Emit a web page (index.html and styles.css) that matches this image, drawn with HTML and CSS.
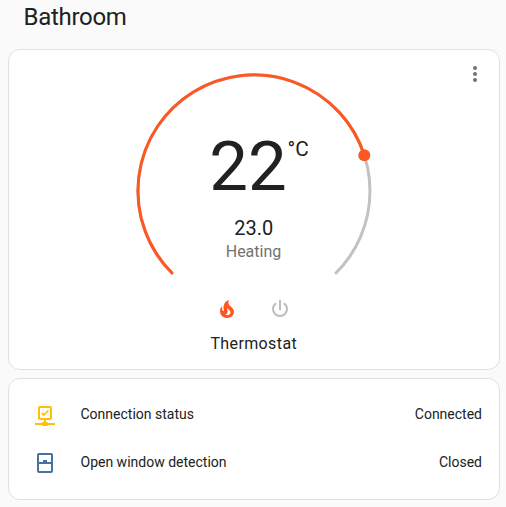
FILE: index.html
```html
<!DOCTYPE html>
<html lang="en">
<head>
<meta charset="utf-8">
<title>Bathroom</title>
<link rel="stylesheet" href="styles.css">
</head>
<body>
<h1 class="title">Bathroom</h1>
<main class="cards">
  <section class="card thermostat">
    <button class="more" aria-label="More">
      <svg class="icon" viewBox="0 0 24 24"><path d="M12,16A2,2 0 0,1 14,18A2,2 0 0,1 12,20A2,2 0 0,1 10,18A2,2 0 0,1 12,16M12,10A2,2 0 0,1 14,12A2,2 0 0,1 12,14A2,2 0 0,1 10,12A2,2 0 0,1 12,10M12,4A2,2 0 0,1 14,6A2,2 0 0,1 12,8A2,2 0 0,1 10,6A2,2 0 0,1 12,4Z"/></svg>
    </button>
    <svg class="dial" viewBox="0 0 248 220">
      <path class="track" d="M42 211A116 116 0 1 1 206 211"/>
      <path class="value" d="M42 211A116 116 0 1 1 234.3 93.2"/>
      <circle class="knob" cx="234.3" cy="93.2" r="6"/>
      <text class="current" x="79.2" y="128">22</text>
      <text class="unit" x="157.6" y="94">°C</text>
      <text class="target" x="123.7" y="173">23.0</text>
      <text class="action" x="123.5" y="195">Heating</text>
    </svg>
    <div class="modes">
      <svg class="icon fire" viewBox="0 0 24 24"><path d="M17.66 11.2C17.43 10.9 17.15 10.64 16.89 10.38C16.22 9.78 15.46 9.35 14.82 8.72C13.33 7.26 13 4.85 13.95 3C13 3.23 12.17 3.75 11.46 4.32C8.87 6.4 7.85 10.07 9.07 13.22C9.11 13.32 9.15 13.42 9.15 13.55C9.15 13.77 9 13.97 8.8 14.05C8.57 14.15 8.33 14.09 8.14 13.93C8.08 13.88 8.04 13.83 8 13.76C6.87 12.33 6.69 10.28 7.45 8.64C5.78 10 4.87 12.3 5 14.47C5.06 14.97 5.12 15.47 5.29 15.97C5.43 16.57 5.7 17.17 6 17.7C7.08 19.43 8.95 20.67 10.96 20.92C13.1 21.19 15.39 20.8 17.03 19.32C18.86 17.66 19.5 15 18.56 12.72L18.43 12.46C18.22 12 17.66 11.2 17.66 11.2M14.5 17.5C14.22 17.74 13.76 18 13.4 18.1C12.28 18.5 11.16 17.94 10.5 17.28C11.69 17 12.4 16.12 12.61 15.23C12.78 14.43 12.46 13.77 12.33 13C12.21 12.26 12.23 11.63 12.5 10.94C12.69 11.32 12.89 11.7 13.13 12C13.9 13 15.11 13.44 15.37 14.8C15.41 14.94 15.43 15.08 15.43 15.23C15.46 16.05 15.1 16.95 14.5 17.5Z"/></svg>
      <svg class="icon power" viewBox="0 0 24 24"><path d="M16.56,5.44L15.11,6.89C16.84,7.94 18,9.83 18,12A6,6 0 0,1 12,18A6,6 0 0,1 6,12C6,9.83 7.16,7.94 8.88,6.88L7.44,5.44C5.36,6.88 4,9.28 4,12A8,8 0 0,0 12,20A8,8 0 0,0 20,12C20,9.28 18.64,6.88 16.56,5.44M13,3H11V13H13"/></svg>
    </div>
    <div class="name">Thermostat</div>
  </section>
  <section class="card entities">
    <div class="row">
      <svg class="icon network" viewBox="0 0 24 24"><path d="M15,20A1,1 0 0,0 14,19H13V17H17A2,2 0 0,0 19,15V5A2,2 0 0,0 17,3H7A2,2 0 0,0 5,5V15A2,2 0 0,0 7,17H11V19H10A1,1 0 0,0 9,20H2V22H9A1,1 0 0,0 10,23H14A1,1 0 0,0 15,22H22V20H15M7,15V5H17V15H7M10.8,13.2L15.9,8.1L14.7,6.9L10.8,10.8L9.3,9.3L8.1,10.5Z"/></svg>
      <span class="label">Connection status</span>
      <span class="state">Connected</span>
    </div>
    <div class="row">
      <svg class="icon window" viewBox="0 0 24 24"><path d="M6,11H10V9H14V11H18V4H6V11M18,13H6V20H18V13M6,2H18A2,2 0 0,1 20,4V20A2,2 0 0,1 18,22H6A2,2 0 0,1 4,20V4A2,2 0 0,1 6,2Z"/></svg>
      <span class="label">Open window detection</span>
      <span class="state">Closed</span>
    </div>
  </section>
</main>
</body>
</html>
```
FILE: styles.css
```css
* { box-sizing: border-box; }
body {
  margin: 0;
  height: 507px;
  overflow: hidden;
  background: #fafafa;
  color: #212121;
  font-family: Roboto, sans-serif;
}
.title {
  margin: 0;
  padding: 1px 23.5px 0;
  height: 49px;
  font-size: 24px;
  line-height: 32px;
  font-weight: 400;
  letter-spacing: -0.012em;
}
.cards {
  display: flex;
  flex-direction: column;
  gap: 8px;
  width: 492px;
  margin-left: 8px;
}
.card {
  background: #fff;
  border: 1px solid #e0e0e0;
  border-radius: 12px;
}
.icon { display: block; width: 24px; height: 24px; fill: currentColor; }
.thermostat {
  position: relative;
  height: 321px;
  padding-top: 12px;
  display: flex;
  flex-direction: column;
  align-items: center;
}
.more {
  position: absolute;
  top: 12px;
  right: 12px;
  padding: 0;
  border: 0;
  background: none;
  color: #727272;
}
.dial { display: block; width: 248px; height: 220px; }
.track, .value { fill: none; stroke-width: 3; stroke-linecap: round; }
.track { stroke: #c2c2c2; }
.value { stroke: #ff5722; }
.knob { fill: #ff5722; }
.dial text { fill: #212121; }
.dial .current { font-size: 69px; }
.dial .unit { font-size: 20.7px; }
.dial .target { font-size: 20px; text-anchor: middle; }
.dial .action { font-size: 16px; text-anchor: middle; fill: #727272; }
.modes { display: flex; gap: 29px; margin: 15px 1px 0 0; }
.fire { color: #ff5722; }
.power { color: #bdbdbd; }
.name {
  margin-top: 11px;
  padding-right: 0.5px;
  font-size: 16px;
  line-height: 24px;
  letter-spacing: 0.024em;
}
.entities {
  height: 122px;
  padding: 16px 17px 16px 24px;
  display: flex;
  flex-direction: column;
  gap: 8px;
}
.row {
  height: 40px;
  display: flex;
  align-items: center;
  font-size: 14px;
  line-height: 20px;
}
.label, .state { padding-bottom: 2px; }
.label { flex: 1; margin-left: 23.5px; }
.network { color: #fdc007; }
.window { color: #44739e; }
```
